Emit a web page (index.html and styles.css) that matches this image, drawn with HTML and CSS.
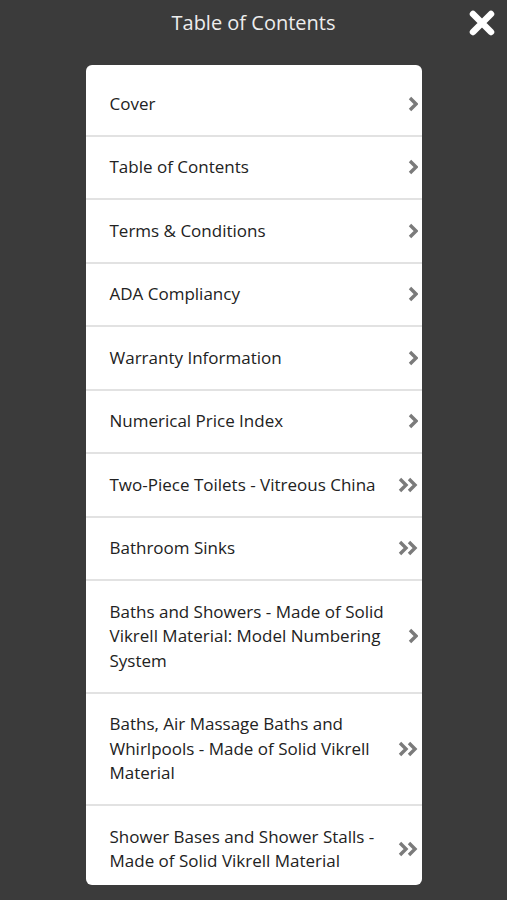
FILE: index.html
```html
<!DOCTYPE html>
<html lang="en">
<head>
  <meta charset="UTF-8">
  <meta name="viewport" content="width=device-width, initial-scale=1.0">
  <title>Table of Contents</title>
  <link rel="stylesheet" href="styles.css">
</head>
<body>
  <div class="header">
    <h1>Table of Contents</h1>
    <button class="close" aria-label="Close">
      <svg width="26" height="26" viewBox="0 0 26 26">
        <path d="M4 4 L22 22 M22 4 L4 22" stroke="#fff" stroke-width="6.5" stroke-linecap="round"/>
      </svg>
    </button>
  </div>

  <div class="toc">
    <a class="item"><span>Cover</span><i class="arrow single"></i></a>
    <a class="item"><span>Table of Contents</span><i class="arrow single"></i></a>
    <a class="item"><span>Terms &amp; Conditions</span><i class="arrow single"></i></a>
    <a class="item"><span>ADA Compliancy</span><i class="arrow single"></i></a>
    <a class="item"><span>Warranty Information</span><i class="arrow single"></i></a>
    <a class="item"><span>Numerical Price Index</span><i class="arrow single"></i></a>
    <a class="item"><span>Two-Piece Toilets - Vitreous China</span><i class="arrow double"></i></a>
    <a class="item"><span>Bathroom Sinks</span><i class="arrow double"></i></a>
    <a class="item"><span>Baths and Showers - Made of Solid Vikrell Material: Model Numbering System</span><i class="arrow single"></i></a>
    <a class="item"><span>Baths, Air Massage Baths and Whirlpools - Made of Solid Vikrell Material</span><i class="arrow double"></i></a>
    <a class="item"><span>Shower Bases and Shower Stalls - Made of Solid Vikrell Material</span><i class="arrow double"></i></a>
  </div>

  <script>
    // chevron icons
    const single = '<svg width="10" height="16" viewBox="0 0 10 16"><polyline points="2,2 8,8 2,14" fill="none" stroke="#7b7b7b" stroke-width="3.4"/></svg>';
    const double = '<svg width="20" height="16" viewBox="0 0 20 16"><polyline points="2,2 8,8 2,14" fill="none" stroke="#7b7b7b" stroke-width="3.4"/><polyline points="11,2 17,8 11,14" fill="none" stroke="#7b7b7b" stroke-width="3.4"/></svg>';
    document.querySelectorAll(".arrow").forEach(el => {
      el.innerHTML = el.classList.contains("double") ? double : single;
    });
  </script>
</body>
</html>
```

FILE: styles.css
```css
* {
  box-sizing: border-box;
  margin: 0;
  padding: 0;
  font-family: "Open Sans", "Noto Sans", sans-serif;
}

body {
  background-color: #3b3b3b;
  width: 507px;
  height: 900px;
  overflow: hidden;
}

.header {
  position: relative;
  height: 65px;
  text-align: center;
}

.header h1 {
  padding-top: 8px;
  font-size: 20px;
  font-weight: 400;
  line-height: 30px;
  color: #ededed;
}

.close {
  position: absolute;
  top: 10px;
  right: 12px;
  background: none;
  border: none;
  cursor: pointer;
}

.toc {
  width: 336px;
  margin: 0 auto;
  background: #fff;
  border-radius: 6px;
  padding: 8px 0 0;
  height: 820px;
  overflow: hidden;
}

.item {
  display: flex;
  align-items: center;
  padding: 18.5px 4px 18.5px 24px;
  border-bottom: 2px solid #e2e2e2;
  font-size: 17px;
  line-height: 24.5px;
  color: #222;
  cursor: pointer;
}

.item:last-child {
  border-bottom: none;
}

.item span {
  flex: 1;
}

.arrow {
  width: 28px;
  display: flex;
  justify-content: flex-end;
}
```
